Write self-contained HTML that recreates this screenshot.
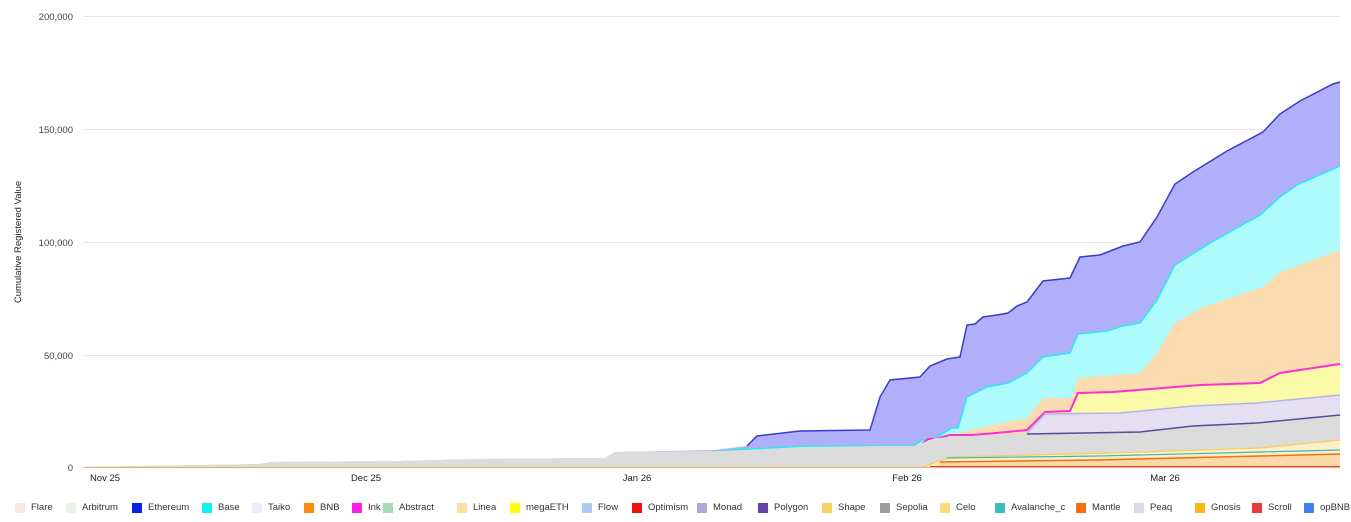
<!DOCTYPE html>
<html><head><meta charset="utf-8"><style>
body{margin:0;background:#fff;width:1351px;height:522px;overflow:hidden;font-family:"Liberation Sans",Arial,sans-serif}
svg text{font-family:"Liberation Sans",Arial,sans-serif}
.lg{position:absolute;top:502px;font-size:9.5px;color:#333;white-space:nowrap;line-height:12px}
.lg i{position:absolute;left:-16px;top:1px;width:10px;height:10px}
</style></head><body>
<svg width="1351" height="522" style="position:absolute;left:0;top:0">
<g stroke="#e6e6e6" stroke-width="1">
<line x1="83" y1="16.5" x2="1340" y2="16.5"/><line x1="83" y1="129.5" x2="1340" y2="129.5"/>
<line x1="83" y1="242.5" x2="1340" y2="242.5"/><line x1="83" y1="355.5" x2="1340" y2="355.5"/>
</g>
<g font-size="9.5" fill="#444" text-anchor="end">
<text x="73" y="20">200,000</text><text x="73" y="133">150,000</text><text x="73" y="246">100,000</text><text x="73" y="359">50,000</text><text x="73" y="471">0</text>
</g>
<text transform="translate(21,242) rotate(-90)" font-size="9.5" fill="#222" text-anchor="middle">Cumulative Registered Value</text>
<polygon fill="#b0b0fa" points="83,467 260,464 270,462 400,461 480,459 605,458 615,452 715,450 747,446 757,436 800,431 870,430 880,397 890,380 920,377 930,366 947,359 960,357 967,325 975,324 983,317 997,315 1008,313 1017,306 1027,302 1043,281 1070,278 1080,257 1100,255 1123,246 1140,242 1157,217 1175,184 1193,172 1227,151 1263,132 1280,114 1300,101 1333,84 1340,82 1340,467"/>
<polyline fill="none" stroke="#3a3ad0" stroke-width="1.5" points="747,446 757,436 800,431 870,430 880,397 890,380 920,377 930,366 947,359 960,357 967,325 975,324 983,317 997,315 1008,313 1017,306 1027,302 1043,281 1070,278 1080,257 1100,255 1123,246 1140,242 1157,217 1175,184 1193,172 1227,151 1263,132 1280,114 1300,101 1333,84 1340,82"/>
<polygon fill="#aefbfb" points="715,451 750,449 808,446 880,446 913,446 923,440 935,438 952,428 958,428 967,397 975,393 987,387 1008,383 1027,373 1043,357 1070,353 1078,334 1107,331 1123,326 1140,323 1157,300 1175,265 1210,243 1260,215 1280,197 1297,185 1340,166 1340,467 715,467"/>
<polyline fill="none" stroke="#2ee6f2" stroke-width="1.5" points="715,451 750,449 808,446 880,446 913,446 923,440 935,438 952,428 958,428 967,397 975,393 987,387 1008,383 1027,373 1043,357 1070,353 1078,334 1107,331 1123,326 1140,323 1157,300 1175,265 1210,243 1260,215 1280,197 1297,185 1340,166"/>
<polygon fill="#fbdcb0" points="920,446 960,434 970,430 1027,418 1043,398 1072,398 1078,378 1140,373 1157,353 1175,323 1203,307 1263,287 1280,272 1340,250 1340,467 920,467"/>
<polygon fill="#fbfaa8" points="1027,430 1045,412 1070,411 1078,393 1113,392 1200,385 1260,383 1280,373 1340,364 1340,467 1027,467"/>
<polyline fill="none" stroke="#ff2ed0" stroke-width="2" points="920,446 928,439 935,439 950,435 973,435 1007,432 1027,430 1045,412 1070,411 1078,393 1113,392 1200,385 1260,383 1280,373 1340,364"/>
<polygon fill="#e4e0f2" points="1027,433 1045,414 1120,413 1193,406 1257,403 1340,395 1340,467 1027,467"/>
<polyline fill="none" stroke="#b4b4e8" stroke-width="1.5" points="1027,433 1045,414 1120,413 1193,406 1257,403 1340,395"/>
<polygon fill="#dcdcdc" points="83,467 260,464 270,462 400,461 480,459 605,458 615,452 715,451 750,450 808,447 880,446 915,446 935,438 990,435 1027,434 1140,432 1193,426 1257,423 1340,415 1340,467"/>
<polyline fill="none" stroke="#5b4a99" stroke-width="1.5" points="1027,434 1140,432 1193,426 1257,423 1340,415"/>
<polygon fill="#fdf0c8" points="923,467 950,457 1113,453 1260,448 1340,440 1340,467"/>
<polyline fill="none" stroke="#f8cc60" stroke-width="1.2" points="923,467 950,457 1113,453 1260,448 1340,440"/>
<polyline fill="none" stroke="#3cb8b8" stroke-width="1.2" points="947,458 1100,456 1340,450"/>
<polygon fill="#fcd9a8" points="940,462 1340,454 1340,467 935,467"/>
<polyline fill="none" stroke="#f0701a" stroke-width="1.5" points="940,462 1100,460 1340,454"/>
<line x1="83" y1="467.5" x2="1340" y2="467.5" stroke="#e0b870" stroke-width="1.2"/>
<line x1="930" y1="466.5" x2="1340" y2="466.5" stroke="#e04040" stroke-width="1"/>
<g font-size="9.5" fill="#222" text-anchor="middle">
<text x="105" y="481">Nov 25</text><text x="366" y="481">Dec 25</text><text x="637" y="481">Jan 26</text><text x="907" y="481">Feb 26</text><text x="1165" y="481">Mar 26</text>
</g>
</svg>
<div class="lg" style="left:31px"><i style="background:#fde6dc"></i>Flare</div>
<div class="lg" style="left:82px"><i style="background:#e6f4ea"></i>Arbitrum</div>
<div class="lg" style="left:148px"><i style="background:#0a22e6"></i>Ethereum</div>
<div class="lg" style="left:218px"><i style="background:#10f0f0"></i>Base</div>
<div class="lg" style="left:268px"><i style="background:#e8eefa"></i>Taiko</div>
<div class="lg" style="left:320px"><i style="background:#ff8c10"></i>BNB</div>
<div class="lg" style="left:368px"><i style="background:#ff1ee6"></i>Ink</div>
<div class="lg" style="left:399px"><i style="background:#a8dcb4"></i>Abstract</div>
<div class="lg" style="left:473px"><i style="background:#fce0a0"></i>Linea</div>
<div class="lg" style="left:526px"><i style="background:#ffff10"></i>megaETH</div>
<div class="lg" style="left:598px"><i style="background:#b0c8f0"></i>Flow</div>
<div class="lg" style="left:648px"><i style="background:#f01010"></i>Optimism</div>
<div class="lg" style="left:713px"><i style="background:#b0a8dc"></i>Monad</div>
<div class="lg" style="left:774px"><i style="background:#6044a8"></i>Polygon</div>
<div class="lg" style="left:838px"><i style="background:#fcd060"></i>Shape</div>
<div class="lg" style="left:896px"><i style="background:#9c9c9c"></i>Sepolia</div>
<div class="lg" style="left:956px"><i style="background:#fcdc80"></i>Celo</div>
<div class="lg" style="left:1011px"><i style="background:#40bcc4"></i>Avalanche_c</div>
<div class="lg" style="left:1092px"><i style="background:#fc6c10"></i>Mantle</div>
<div class="lg" style="left:1150px"><i style="background:#dcd8ec"></i>Peaq</div>
<div class="lg" style="left:1211px"><i style="background:#fcb810"></i>Gnosis</div>
<div class="lg" style="left:1268px"><i style="background:#e83c3c"></i>Scroll</div>
<div class="lg" style="left:1320px"><i style="background:#4080f0"></i>opBNB</div>
</body></html>
